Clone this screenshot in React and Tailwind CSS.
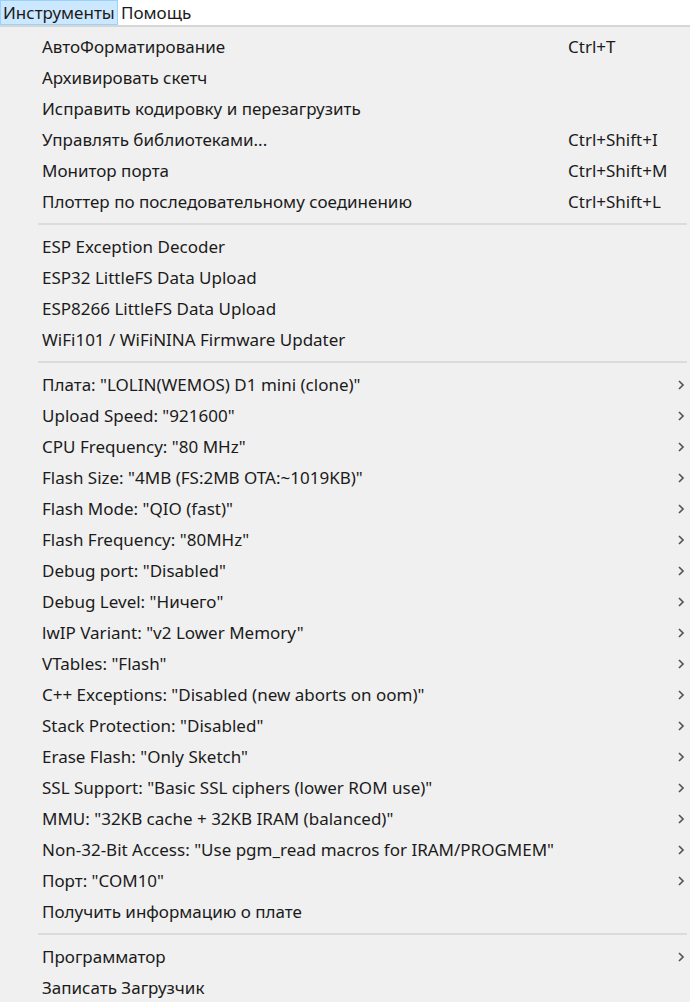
import React from "react";

const Chevron = () => (
  <svg width="8" height="12" viewBox="0 0 8 12" className="block">
    <path d="M2 2 L6 6 L2 10" fill="none" stroke="#555" strokeWidth="1.7" />
  </svg>
);

const groups = [
  [
    ["АвтоФорматирование", "Ctrl+T"],
    ["Архивировать скетч"],
    ["Исправить кодировку и перезагрузить"],
    ["Управлять библиотеками...", "Ctrl+Shift+I"],
    ["Монитор порта", "Ctrl+Shift+M"],
    ["Плоттер по последовательному соединению", "Ctrl+Shift+L"],
  ],
  [
    ["ESP Exception Decoder"],
    ["ESP32 LittleFS Data Upload"],
    ["ESP8266 LittleFS Data Upload"],
    ["WiFi101 / WiFiNINA Firmware Updater"],
  ],
  [
    ['Плата: "LOLIN(WEMOS) D1 mini (clone)"', null, true],
    ['Upload Speed: "921600"', null, true],
    ['CPU Frequency: "80 MHz"', null, true],
    ['Flash Size: "4MB (FS:2MB OTA:~1019KB)"', null, true],
    ['Flash Mode: "QIO (fast)"', null, true],
    ['Flash Frequency: "80MHz"', null, true],
    ['Debug port: "Disabled"', null, true],
    ['Debug Level: "Ничего"', null, true],
    ['lwIP Variant: "v2 Lower Memory"', null, true],
    ['VTables: "Flash"', null, true],
    ['C++ Exceptions: "Disabled (new aborts on oom)"', null, true],
    ['Stack Protection: "Disabled"', null, true],
    ['Erase Flash: "Only Sketch"', null, true],
    ['SSL Support: "Basic SSL ciphers (lower ROM use)"', null, true],
    ['MMU: "32KB cache + 32KB IRAM (balanced)"', null, true],
    ['Non-32-Bit Access: "Use pgm_read macros for IRAM/PROGMEM"', null, true],
    ['Порт: "COM10"', null, true],
    ["Получить информацию о плате"],
  ],
  [
    ["Программатор", null, true],
    ["Записать Загрузчик"],
  ],
];

function Row({ label, shortcut, sub }) {
  return (
    <div className="h-[31px] flex items-center relative">
      <span className="pl-[42px] whitespace-nowrap">{label}</span>
      {shortcut && (
        <span className="absolute left-[568px] whitespace-nowrap">{shortcut}</span>
      )}
      {sub && (
        <span className="absolute left-[677px] top-[10px]">
          <Chevron />
        </span>
      )}
    </div>
  );
}

export default function App() {
  return (
    <div
      className="w-[690px] h-[1002px] overflow-hidden bg-[#f0f0f0] text-[#1b1b1b] text-[17px]"
      style={{ fontFamily: '"Noto Sans", "Open Sans", sans-serif' }}
    >
      <div className="h-[27px] bg-white flex items-stretch border-b-[2px] border-[#d4d7d4]">
        <div className="w-[118px] bg-[#cce8ff] border border-[#99d1ff] flex items-center pl-[2px]">
          Инструменты
        </div>
        <div className="flex items-center pl-[3px]">Помощь</div>
      </div>
      <div className="pt-[4px]">
        {groups.map((g, gi) => (
          <div key={gi}>
            {gi > 0 && (
              <div className="h-[14px] flex items-center pl-[38px] pr-[3px]">
                <div className="h-[2px] w-full bg-[#dcdcdc]" />
              </div>
            )}
            {g.map(([label, shortcut, sub]) => (
              <Row key={label} label={label} shortcut={shortcut} sub={sub} />
            ))}
          </div>
        ))}
      </div>
    </div>
  );
}
